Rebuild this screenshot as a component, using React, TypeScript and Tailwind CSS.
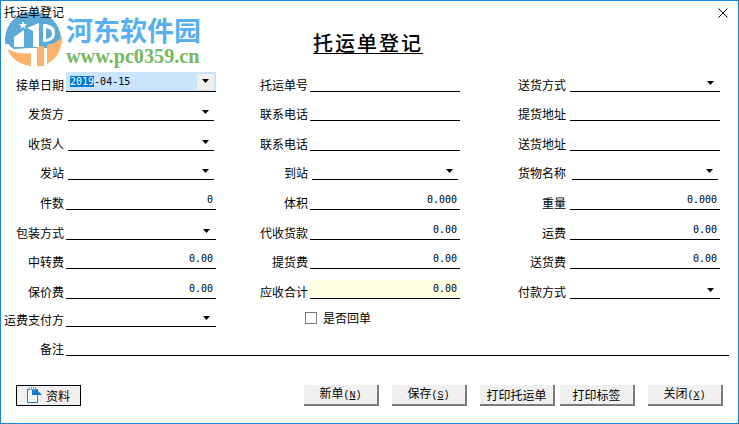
import { FC, ReactNode } from "react"

const cjk = "font-['Noto_Sans_CJK_SC',sans-serif]"

type FieldProps = {
  label: string,
  value?: string,
  dropdown?: boolean,
  inset?: boolean,
  gap?: boolean,
  short?: boolean,
  className?: string,
}

const Arrow: FC<{ className: string }> = ({ className }) => (
  <svg width="7" height="4" viewBox="0 0 7 4" className={`absolute ${className}`}>
    <path d="M0 0H7L3.5 4Z" fill="#000" />
  </svg>
)

const Label: FC<{ text: string }> = ({ text }) => (
  <span className="flex justify-end w-[52px] shrink-0 mb-[-1px] text-[12px] leading-[16px] text-black whitespace-nowrap">{text}</span>
)

const Field: FC<FieldProps> = (props) => {
  const { label, value, dropdown, inset, gap, short, className } = props
  return (
    <div className={`flex items-end ${short ? "h-[28px]" : "h-[29.6px]"}`}>
      <Label text={label} />
      <div className={`relative ${gap ? "ml-[4px]" : "ml-[2px]"} ${inset ? "ml-[4px] mr-[2px] w-[146px]" : "w-[150px]"} h-[22px] border-b border-black ${className ?? ""}`}>
        {value && <span className="absolute right-[3px] bottom-[2px] text-[10px] leading-[14px] text-black font-['DejaVu_Sans_Mono',monospace]">{value}</span>}
        {dropdown && <Arrow className={inset ? "right-[5px] top-[11px]" : "right-[6px] top-[11px]"} />}
      </div>
    </div>
  )
}

const colOne: FieldProps[] = [
  { label: "发货方", dropdown: true, inset: true },
  { label: "收货人", dropdown: true, inset: true },
  { label: "发站", dropdown: true, inset: true },
  { label: "件数", value: "0" },
  { label: "包装方式", dropdown: true },
  { label: "中转费", value: "0.00" },
  { label: "保价费", value: "0.00" },
  { label: "运费支付方", dropdown: true, short: true },
]

const colTwo: FieldProps[] = [
  { label: "托运单号" },
  { label: "联系电话" },
  { label: "联系电话" },
  { label: "到站", dropdown: true, inset: true },
  { label: "体积", value: "0.000" },
  { label: "代收货款", value: "0.00" },
  { label: "提货费", value: "0.00" },
  { label: "应收合计", value: "0.00", className: "bg-[#ffffe1] !h-[19px]" },
]

const colThree: FieldProps[] = [
  { label: "送货方式", dropdown: true, gap: true },
  { label: "提货地址", gap: true },
  { label: "送货地址", gap: true },
  { label: "货物名称", dropdown: true, inset: true, className: "!ml-[6px]" },
  { label: "重量", value: "0.000", gap: true },
  { label: "运费", value: "0.00", gap: true },
  { label: "送货费", value: "0.00", gap: true },
  { label: "付款方式", dropdown: true, gap: true },
]

const Btn: FC<{ children: ReactNode, className?: string }> = ({ children, className }) => (
  <button className={`h-[21px] w-[75px] bg-[#f0f0f0] border-r-2 border-b-2 border-[#7a7a7a] text-[12px] leading-[16px] text-black ${className ?? ""}`}>
    {children}
  </button>
)

const Hotkey: FC<{ letter: string }> = ({ letter }) => (
  <span className="text-[10px] font-['Liberation_Mono',monospace]">(<span className="underline">{letter}</span>)</span>
)

const App: FC = () => {
  return (
    <div className={`relative w-[739px] h-[424px] overflow-hidden bg-white border border-[#1883d7] ${cjk}`}>
      <svg width="70" height="70" viewBox="0 0 70 70" className="absolute left-[-1px] top-[-1px]">
        <circle cx="33" cy="39.5" r="28" fill="#5aa9d6" />
        <path d="M3 44H64V70H3Z" fill="#fff" />
        <path d="M6 38H62Q58 44 48 45L47 48H30L14 49Q8 46 6 38Z" fill="#5aa9d6" />
        <path d="M7 49Q20 55 31 53V66Q14 64 7 49Z" fill="#fbb26a" />
        <path d="M37 66V46H44V66Z" fill="#fbb26a" />
        <path d="M47 64V45Q58 44 62 35Q63 55 47 64Z" fill="#fbb26a" />
        <path d="M14 47V37L24 30V47Z" fill="#fff" />
        <path d="M27 28L39 23V47H33V31Z" fill="#fff" />
        <path d="M43 24H46Q56 26 55 34Q54 42 43 42Z" fill="#fff" />
        <path d="M46 28Q52 29 52 34Q52 38 46 39Z" fill="#5aa9d6" />
        <path d="M23 21L24.2 24H27L24.8 26L25.6 29L23 27L20.4 29L21.2 26L19 24H22Z" fill="#fff" />
      </svg>

      <div className="absolute left-[3px] top-[3px] text-[12px] leading-[16px] text-black">托运单登记</div>

      <div className="absolute left-[65px] top-[14px]">
        <div className="text-[27px] leading-[30px] font-bold whitespace-nowrap text-[#5ab0ee]">河东软件园</div>
        <div className="text-[20.2px] leading-[20px] mt-[1px] font-bold whitespace-nowrap text-[#74b95f] font-['Liberation_Serif',serif]">www.pc0359.cn</div>
      </div>

      <button className="absolute right-[10px] top-[7px]" aria-label="close">
        <svg width="10" height="10" viewBox="0 0 10 10" className="block"><path d="M0.5 0.5L9.5 9.5M9.5 0.5L0.5 9.5" stroke="#000" strokeWidth="1" /></svg>
      </button>

      <div className="pt-[32px] pl-[312px]">
        <h1 className="block w-fit border-b border-black text-[20px] leading-[20px] font-medium text-black tracking-[2px]">托运单登记</h1>
      </div>

      <div className="grid grid-cols-[244px_258px_1fr] pl-[11px] mt-[8px]">
        <div>
          <div className="flex items-end h-[29.6px]">
            <Label text="接单日期" />
            <div className="relative ml-[2px] h-[20px] w-[150px] border-b border-black bg-[#cce4fb] text-[10px] leading-[12px] font-['DejaVu_Sans_Mono',monospace] text-black pl-[4px] pt-[4px]">
              <span className="bg-[#0078d7] text-white">2019</span>-04-15
              <span className="absolute right-[2px] top-[2px] w-[17px] h-[16px] bg-[#f0f0f0]"></span>
              <Arrow className="right-[7px] top-[7px]" />
            </div>
          </div>
          {colOne.map((item, index) => <Field key={index} {...item} />)}
        </div>
        <div>
          {colTwo.map((item, index) => <Field key={index} {...item} />)}
          <label className="flex items-center ml-[49px] mt-[11px] text-[12px] leading-[16px] text-black">
            <span className="w-[12px] h-[12px] border border-[#7a7a7a] bg-white mr-[6px]"></span>
            是否回单
          </label>
        </div>
        <div>
          {colThree.map((item, index) => <Field key={index} {...item} />)}
        </div>
      </div>

      <div className="flex items-end h-[29.6px] pl-[11px]">
        <Label text="备注" />
        <div className="ml-[2px] w-[663px] border-b border-black"></div>
      </div>

      <div className="flex items-center pl-[15px] mt-[29px]">
        <button className="flex items-center h-[21px] w-[65px] pl-[9px] border border-black bg-[#f0f0f0] text-[12px] text-black">
          <svg width="16" height="17" viewBox="0 0 16 17" className="mr-[4px]">
            <rect x="1.5" y="2.5" width="10" height="13" fill="#fff" stroke="#1f7fc8" />
            <path d="M3 3H10M3 6H10M3 9H10M3 12H10" stroke="#ddd" />
            <path d="M3.5 0V2M5.5 0V2M7.5 0V2M9.5 0V2" stroke="#999" />
            <path d="M6 3H11L16 8H6Z" fill="#1478d0" />
          </svg>
          资料
        </button>
        <div className="flex ml-[223px] gap-[13px]">
          <Btn>新单<Hotkey letter="N" /></Btn>
          <Btn>保存<Hotkey letter="S" /></Btn>
        </div>
        <div className="flex ml-[13px] gap-[5px]">
          <Btn>打印托运单</Btn>
          <Btn>打印标签</Btn>
        </div>
        <Btn className="ml-[13px]">关闭<Hotkey letter="X" /></Btn>
      </div>
    </div>
  )
}

export default App
